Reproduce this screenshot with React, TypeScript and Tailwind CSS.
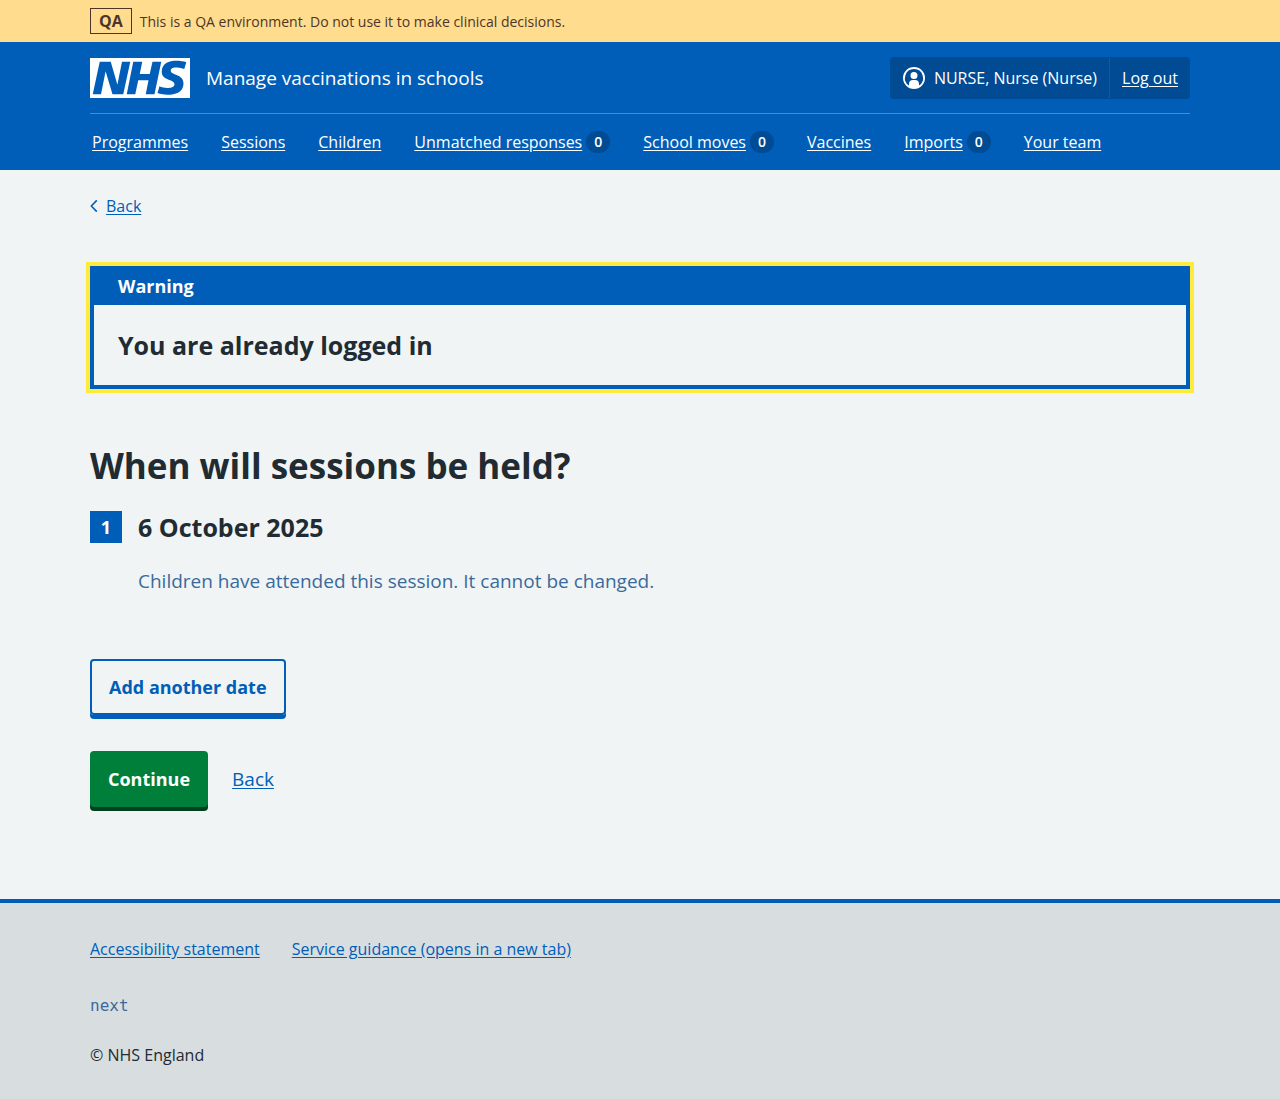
import React from "react";

const link = "text-[#005eb8] underline underline-offset-2 hover:no-underline";
const container = "mx-auto w-full max-w-[1100px]";

const navItems: { label: string; count?: number }[] = [
  { label: "Programmes" },
  { label: "Sessions" },
  { label: "Children" },
  { label: "Unmatched responses", count: 0 },
  { label: "School moves", count: 0 },
  { label: "Vaccines" },
  { label: "Imports", count: 0 },
  { label: "Your team" },
];

function EnvironmentBanner() {
  return (
    <div className="bg-[#ffdc8e] text-[#4d3629]">
      <div className={`${container} flex items-end gap-2 py-2 text-sm`}>
        <strong className="border border-[#4d3629] px-2 text-base leading-6 font-bold">QA</strong>
        <span className="leading-6">This is a QA environment. Do not use it to make clinical decisions.</span>
      </div>
    </div>
  );
}

function NhsLogo() {
  return (
    <svg className="h-10 w-[100px] text-white" viewBox="0 0 200 80" role="img" aria-label="NHS">
      <path
        fill="currentColor"
        d="M200 0v80H0V0h200Zm-27.500 5.500c-14.500 0-29 5-29 22 0 10.200 7.700 13.500 14.700 16.300l.7.300c5.400 2 10.100 3.900 10.100 8.400 0 6.500-8.500 7.500-14 7.500s-12.500-1.500-16-3.500L135 70c5.500 2 13.500 3.500 20 3.500 15.500 0 32-4.500 32-22.500 0-19.500-25.500-16.500-25.500-25.500 0-5.500 5.500-6.500 12.500-6.500a35 35 0 0 1 14.500 3l4-13.500c-4.500-2-12-3-20-3Zm-131 2h-22l-14 65H22l9-45h.5l13.500 45h21.500l14-65H64l-9 45h-.5l-13-45Zm63 0h-18l-13 65h17l6-28H117l-5.500 28H129l13.500-65H125L119.500 32h-20l5-24.500Z"
      />
    </svg>
  );
}

function UserIcon() {
  return (
    <svg className="size-6 shrink-0" viewBox="0 0 24 24" fill="currentColor" aria-hidden="true">
      <path d="M12 1a11 11 0 1 1 0 22 11 11 0 0 1 0-22Zm0 2a9 9 0 0 0-5 16.500V18a4 4 0 0 1 4-4h2a4 4 0 0 1 4 4v1.500A9 9 0 0 0 12 3Zm0 3a3.500 3.500 0 1 1-3.500 3.500A3.400 3.400 0 0 1 12 6Z" />
    </svg>
  );
}

function Header() {
  return (
    <header className="bg-[#005eb8] text-white">
      <div className={container}>
        <div className="flex items-center justify-between border-b border-[#3d8edc] pt-[15px] pb-[14px]">
          <a href="#" className="flex items-center gap-4 text-[19px] leading-7">
            <NhsLogo />
            Manage vaccinations in schools
          </a>
          <div className="flex items-stretch rounded bg-[#004b93] text-base">
            <span className="my-px flex items-center gap-2 border-r border-[#005eb8] px-3 py-2 leading-6">
              <UserIcon />
              NURSE, Nurse (Nurse)
            </span>
            <a href="#" className="flex items-center px-3 leading-6 underline underline-offset-2">
              Log out
            </a>
          </div>
        </div>
        <nav aria-label="Menu">
          <ul className="flex flex-wrap gap-x-[33px] pl-0.5">
            {navItems.map((item) => (
              <li key={item.label} className="flex items-center gap-1 py-4 text-base leading-6">
                <a href="#" className="underline underline-offset-2">{item.label}</a>
                {item.count !== undefined && (
                  <span className="flex h-[22px] w-6 items-center justify-center rounded-full bg-[#004b93] text-sm font-semibold">
                    {item.count}
                  </span>
                )}
              </li>
            ))}
          </ul>
        </nav>
      </div>
    </header>
  );
}

export default function App() {
  return (
    <div className="flex min-h-screen flex-col bg-[#f0f4f5] font-['Open_Sans',sans-serif] text-[#212b32]">
      <EnvironmentBanner />
      <Header />

      <div className={`${container} grow pb-[84px]`}>
        <a href="#" className="mt-6 flex w-fit items-center gap-2 leading-6 text-[#005eb8]">
          <svg className="h-3 w-2" viewBox="0 0 8 12" fill="none" stroke="currentColor" strokeWidth="1.6" aria-hidden="true">
            <path d="M6.300 .900 1.300 6l5 5.100" strokeLinecap="round" strokeLinejoin="round" />
          </svg>
          <span className="underline underline-offset-2">Back</span>
        </a>

        <main className="mt-12">
          <div
            role="alert"
            aria-labelledby="banner-title"
            className="border-4 border-[#005eb8] outline-4 outline-[#ffeb3b]"
          >
            <h2 id="banner-title" className="bg-[#005eb8] px-6 pt-0.5 pb-[5px] text-lg leading-7 font-bold text-white">
              Warning
            </h2>
            <h3 className="p-6 text-[25px] leading-8 font-bold">You are already logged in</h3>
          </div>

          <h1 className="mt-[55px] text-[35px] leading-[44px] font-bold">When will sessions be held?</h1>

          <ol className="mt-[23px]">
            <li className="flex gap-4">
              <span className="flex size-8 items-center justify-center bg-[#005eb8] text-lg leading-7 font-bold text-white">
                1
              </span>
              <div>
                <h2 className="text-[25px] leading-8 font-bold">6 October 2025</h2>
                <p className="mt-6 text-[19px] leading-7 text-[#3a6a9b]">
                  Children have attended this session. It cannot be changed.
                </p>
              </div>
            </li>
          </ol>

          <button
            type="button"
            className="mt-16 block rounded border-2 border-[#005eb8] px-[17px] py-3 text-lg leading-7 font-bold text-[#005eb8] shadow-[0_4px_0_#005eb8]"
          >
            Add another date
          </button>

          <div className="mt-9 mb-1 flex items-center gap-6">
            <button
              type="submit"
              className="rounded bg-[#007f3b] px-[18px] py-[14px] text-lg leading-7 font-bold text-white shadow-[0_4px_0_#00401e]"
            >
              Continue
            </button>
            <a href="#" className={`${link} text-[19px] leading-7`}>Back</a>
          </div>
        </main>
      </div>

      <footer className="border-t-4 border-[#005eb8] bg-[#d8dde0] pt-[34px] pb-8">
        <div className={container}>
          <ul className="flex flex-wrap gap-x-8">
            <li><a href="#" className={link}>Accessibility statement</a></li>
            <li><a href="#" className={link}>Service guidance (opens in a new tab)</a></li>
          </ul>
          <p className="mt-[33px] font-['DejaVu_Sans_Mono',monospace] text-base leading-6 text-[#3a6a9b]">next</p>
          <p className="mt-[25px] leading-6">© NHS England</p>
        </div>
      </footer>
    </div>
  );
}
